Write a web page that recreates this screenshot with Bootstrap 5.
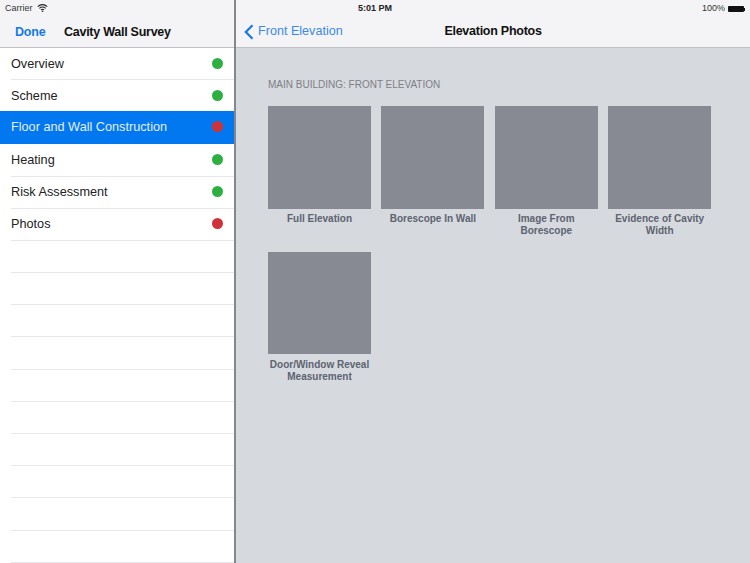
<!DOCTYPE html>
<html lang="en">
<head>
<meta charset="utf-8">
<title>Elevation Photos</title>
<link href="https://cdn.jsdelivr.net/npm/bootstrap@5.3.0/dist/css/bootstrap.min.css" rel="stylesheet">
<style>
html,body{height:563px;overflow:hidden;}
body{width:750px;font-family:"Liberation Sans",Arial,sans-serif;background:#d6d9de;color:#111;}
.shell{height:563px;}
.side{width:236px;flex:none;background:#fff;border-right:2px solid #85878b;height:563px;overflow:hidden;}
.main{flex:1 1 auto;min-width:0;}
.barhead{height:48px;background:#f4f4f6;border-bottom:1px solid #c0c1c4;position:relative;flex:none;}
.statusrow{height:16px;font-size:9px;line-height:16px;color:#333;padding-left:5px;}
.navrow{height:31px;padding-top:1px;}
.donebtn{color:#1479e4;font-size:12.5px;font-weight:700;letter-spacing:-.2px;width:64px;padding-left:15px;}
.sidetitle{font-size:12.5px;font-weight:700;letter-spacing:-.26px;color:#111;}
.rowitem{height:32.2px;padding-left:11px;font-size:12.7px;color:#222;position:relative;}
.rowitem::after{content:"";position:absolute;left:11px;right:0;bottom:0;height:1px;background:#e8e8ea;}
.rowitem.picked{background:#0278f0;color:#e3effc;margin-top:-1px;margin-bottom:.8px;padding-top:1px;}
.rowitem.picked::after{display:none;}
.dotmark{width:11px;height:11px;border-radius:50%;margin-right:11px;margin-bottom:2px;flex:none;}
.dot-ok{background:#2db041;}
.dot-bad{background:#cf3339;}
.statusmid{position:absolute;top:0;left:0;right:236px;text-align:center;font-size:9px;line-height:16px;font-weight:700;color:#222;}
.batt{position:absolute;top:1px;right:5px;height:16px;font-size:9px;color:#333;gap:3px;}
.battbody{width:16px;height:6px;background:#111;border-radius:1px;}
.battcap{width:1px;height:3px;background:#111;margin-left:-3px;}
.backlink{position:absolute;left:8px;top:16px;height:31px;color:#3a8ae2;font-size:12.6px;gap:4px;}
.maintitle{position:absolute;top:16px;left:0;right:0;height:31px;line-height:31px;text-align:center;font-size:12.5px;font-weight:700;letter-spacing:-.26px;color:#111;}
.pane{padding:30px 0 0 32px;}
.seclabel{font-size:10px;line-height:13px;color:#7d8085;margin-bottom:15px;}
.tiles{display:grid;grid-template-columns:repeat(4,103px);column-gap:10.4px;row-gap:14.8px;}
.tilebox{height:102.5px;background:#878a92;}
.tilecap{font-size:10px;line-height:12px;font-weight:700;color:#5d6371;text-align:center;margin-top:4.5px;min-height:24px;}
</style>
</head>
<body>
<div class="d-flex shell">
  <aside class="side d-flex flex-column">
    <div class="barhead">
      <div class="statusrow d-flex align-items-center gap-1">Carrier
        <svg width="11" height="8" viewBox="0 0 11 8"><path d="M.8 2.6a6.6 6.6 0 0 1 9.4 0M2.4 4.3a4.3 4.3 0 0 1 6.2 0M4 5.9a2 2 0 0 1 3 0" fill="none" stroke="#222" stroke-width="1.1"/><circle cx="5.5" cy="7.2" r=".8" fill="#222"/></svg>
      </div>
      <div class="navrow d-flex align-items-center">
        <span class="donebtn">Done</span>
        <span class="sidetitle">Cavity Wall Survey</span>
      </div>
    </div>
    <div class="rowitem d-flex align-items-center justify-content-between"><span>Overview</span><span class="dotmark dot-ok"></span></div>
    <div class="rowitem d-flex align-items-center justify-content-between"><span>Scheme</span><span class="dotmark dot-ok"></span></div>
    <div class="rowitem picked d-flex align-items-center justify-content-between"><span>Floor and Wall Construction</span><span class="dotmark dot-bad"></span></div>
    <div class="rowitem d-flex align-items-center justify-content-between"><span>Heating</span><span class="dotmark dot-ok"></span></div>
    <div class="rowitem d-flex align-items-center justify-content-between"><span>Risk Assessment</span><span class="dotmark dot-ok"></span></div>
    <div class="rowitem d-flex align-items-center justify-content-between"><span>Photos</span><span class="dotmark dot-bad"></span></div>
    <div class="rowitem"></div><div class="rowitem"></div><div class="rowitem"></div><div class="rowitem"></div><div class="rowitem"></div><div class="rowitem"></div><div class="rowitem"></div><div class="rowitem"></div><div class="rowitem"></div><div class="rowitem"></div>
  </aside>
  <main class="main d-flex flex-column">
    <div class="barhead">
      <div class="statusmid">5:01 PM</div>
      <div class="batt d-flex align-items-center"><span>100%</span><span class="battbody"></span><span class="battcap"></span></div>
      <div class="backlink d-flex align-items-center">
        <svg width="10" height="16" viewBox="0 0 10 16"><path d="M8.5 1.2 1.8 8l6.7 6.8" fill="none" stroke="#1479e4" stroke-width="2.2"/></svg>
        <span>Front Elevation</span>
      </div>
      <div class="maintitle">Elevation Photos</div>
    </div>
    <div class="pane">
      <div class="seclabel">MAIN BUILDING: FRONT ELEVATION</div>
      <div class="tiles">
        <div><div class="tilebox"></div><div class="tilecap">Full Elevation</div></div>
        <div><div class="tilebox"></div><div class="tilecap">Borescope In Wall</div></div>
        <div><div class="tilebox"></div><div class="tilecap">Image From Borescope</div></div>
        <div><div class="tilebox"></div><div class="tilecap">Evidence of Cavity Width</div></div>
        <div><div class="tilebox"></div><div class="tilecap">Door/Window Reveal Measurement</div></div>
      </div>
    </div>
  </main>
</div>
<script src="https://cdn.jsdelivr.net/npm/bootstrap@5.3.0/dist/js/bootstrap.bundle.min.js"></script>
</body>
</html>
